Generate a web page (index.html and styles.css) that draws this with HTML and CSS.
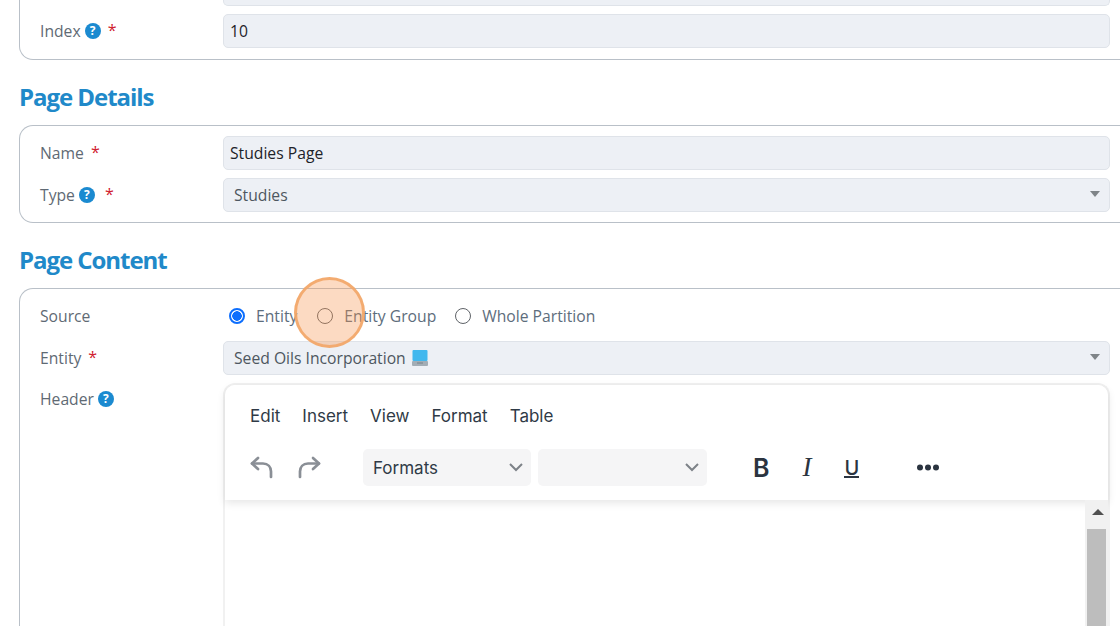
FILE: index.html
```html
<!DOCTYPE html>
<html lang="en">
<head>
    <meta charset="UTF-8">
    <title>Page Settings</title>
    <link rel="stylesheet" href="styles.css">
</head>
<body>
    <div class="page">
        <div class="card card-top">
            <div class="stub-input"></div>
            <div class="field">
                <label class="field-label">Index
                    <span class="help">?</span>
                    <span class="req">*</span>
                </label>
                <div class="input">10</div>
            </div>
        </div>

        <h2 class="section-title">Page Details</h2>
        <div class="card">
            <div class="field">
                <label class="field-label">Name
                    <span class="req req-name">*</span>
                </label>
                <div class="input">Studies Page</div>
            </div>
            <div class="field">
                <label class="field-label">Type
                    <span class="help">?</span>
                    <span class="req req-type">*</span>
                </label>
                <div class="input select">Studies</div>
            </div>
        </div>

        <h2 class="section-title">Page Content</h2>
        <div class="card card-last">
            <div class="field field-radio">
                <label class="field-label">Source</label>
                <div class="radios">
                    <span class="radio checked"></span><span class="radio-text">Entity</span>
                    <span class="radio"></span><span class="radio-text">Entity Group</span>
                    <span class="radio"></span><span class="radio-text">Whole Partition</span>
                </div>
            </div>
            <div class="field">
                <label class="field-label">Entity
                    <span class="req">*</span>
                </label>
                <div class="input select">Seed Oils Incorporation
                    <svg class="laptop" width="16" height="16" viewBox="0 0 16 16">
                        <rect x="0.5" y="0" width="15" height="11" rx="1" fill="#42b8ee"/>
                        <rect x="0" y="11" width="16" height="5" rx="1" fill="#a3adb5"/>
                        <rect x="5" y="12.5" width="6" height="1" fill="#77828a"/>
                    </svg>
                </div>
            </div>
            <div class="field field-editor">
                <label class="field-label">Header
                    <span class="help">?</span>
                </label>
                <div class="editor">
                    <div class="editor-head">
                        <div class="menubar">
                            <span>Edit</span>
                            <span>Insert</span>
                            <span>View</span>
                            <span>Format</span>
                            <span>Table</span>
                        </div>
                        <div class="toolbar">
                            <svg class="tool-icon undo" width="26" height="26" viewBox="0 0 26 26" fill="none" stroke="#8a8f96" stroke-width="2.7" stroke-linecap="round" stroke-linejoin="round">
                                <path d="M9 3 L3 8.5 L9 14"/>
                                <path d="M3 8.5 H14 C19 8.5 22 12 22 16.5 V22"/>
                            </svg>
                            <svg class="tool-icon redo" width="26" height="26" viewBox="0 0 26 26" fill="none" stroke="#8a8f96" stroke-width="2.7" stroke-linecap="round" stroke-linejoin="round">
                                <path d="M17 3 L23 8.5 L17 14"/>
                                <path d="M23 8.5 H12 C7 8.5 4 12 4 16.5 V22"/>
                            </svg>
                            <div class="dropdown dropdown-formats">Formats
                                <svg width="14" height="9" viewBox="0 0 14 9" fill="none" stroke="#7d8288" stroke-width="2"><path d="M1 1 L7 7 L13 1"/></svg>
                            </div>
                            <div class="dropdown dropdown-empty">
                                <svg width="14" height="9" viewBox="0 0 14 9" fill="none" stroke="#7d8288" stroke-width="2"><path d="M1 1 L7 7 L13 1"/></svg>
                            </div>
                            <span class="fmt fmt-b">B</span>
                            <span class="fmt fmt-i">I</span>
                            <span class="fmt fmt-u">U</span>
                            <svg class="more" width="22" height="7" viewBox="0 0 22 7" fill="#2b3440">
                                <circle cx="3" cy="3.5" r="3"/><circle cx="11" cy="3.5" r="3"/><circle cx="19" cy="3.5" r="3"/>
                            </svg>
                        </div>
                    </div>
                    <div class="editor-body">
                        <div class="scrollbar">
                            <div class="scroll-btn"></div>
                            <div class="scroll-thumb"></div>
                        </div>
                    </div>
                </div>
            </div>
        </div>
    </div>

    <div class="click-marker"></div>
</body>
</html>
```

FILE: styles.css
```css
* {
    margin: 0;
    padding: 0;
    box-sizing: border-box;
}

html, body {
    height: 626px;
    overflow: hidden;
}

body {
    font-family: "Open Sans", sans-serif;
    background: #fff;
    color: #5b6670;
    font-size: 15.7px;
    position: relative;
}

.page {
    padding-left: 19px;
    height: 626px;
    overflow: hidden;
}

.card {
    border: 1px solid #b9c0c8;
    border-right: none;
    border-radius: 14px 0 0 14px;
    height: 98px;
    padding: 10px 10px 0 20px;
    display: flex;
    flex-direction: column;
    gap: 8px;
}

.card-top {
    height: 60px;
    border-top: none;
    border-top-left-radius: 0;
    padding-top: 0;
}

.card-last {
    height: 500px;
    border-radius: 14px 0 0 0;
    padding-top: 11px;
}

.stub-input {
    height: 6px;
    margin-left: 183px;
    background: #edf0f5;
    border: 1px solid #dfe3e9;
    border-top: none;
    border-radius: 0 0 5px 5px;
}

.section-title {
    color: #2089c9;
    font-size: 24px;
    font-weight: 700;
    line-height: 34px;
    letter-spacing: -1.05px;
    margin: 19.5px 0 11.5px 0;
}

.field {
    display: flex;
    align-items: center;
}

.field-label {
    width: 183px;
    flex: none;
    display: flex;
    align-items: center;
    column-gap: 4px;
    color: #5f6a74;
}

.help {
    width: 16px;
    height: 16px;
    border-radius: 50%;
    background: #1b8ad0;
    color: #fff;
    font-size: 12px;
    font-weight: 700;
    line-height: 16px;
    text-align: center;
}

.req {
    color: #d0202e;
    font-size: 16px;
    margin-left: 3px;
    position: relative;
    top: -1px;
}

.req-type {
    margin-left: 6px;
}

.input {
    flex: 1;
    height: 34px;
    background: #edf0f5;
    border: 1px solid #dfe3e9;
    border-radius: 5px;
    color: #1d2329;
    line-height: 32px;
    padding-left: 6px;
    position: relative;
}

.select {
    color: #4d5760;
    padding-left: 10px;
}

.select::after {
    content: "";
    position: absolute;
    right: 9px;
    top: 12px;
    border-left: 5px solid transparent;
    border-right: 5px solid transparent;
    border-top: 6px solid #7f8488;
}

.laptop {
    vertical-align: -2px;
    margin-left: 2px;
}

.field-radio {
    height: 32px;
    margin-bottom: 1px;
}

.radios {
    display: flex;
    align-items: center;
    margin-left: 6px;
    color: #5d6d7c;
}

.radio {
    width: 16px;
    height: 16px;
    border: 1px solid #5f6368;
    border-radius: 50%;
    margin-right: 11px;
}

.radio.checked {
    border: 2px solid #0d6efd;
    background: radial-gradient(circle, #0d6efd 0 4.5px, #fff 5px);
}

.radio-text {
    margin-right: 19px;
}

.radio.checked + .radio-text {
    margin-right: 20px;
}

.field-editor {
    align-items: flex-start;
}

.field-editor .field-label {
    margin-top: 5px;
}

.editor {
    flex: 1;
    height: 300px;
    border: 2px solid #f1f1f1;
    border-bottom: none;
    border-radius: 12px 12px 0 0;
    font-family: "Inter", sans-serif;
}

.editor-head {
    height: 115px;
    background: #fff;
    box-shadow: 0 3px 8px rgba(0, 0, 0, 0.1);
    border-radius: 10px 10px 0 0;
    position: relative;
    padding-top: 19px;
}

.menubar {
    display: flex;
    gap: 22px;
    padding-left: 25px;
    font-size: 17px;
    line-height: 24px;
    color: #2f3a46;
}

.toolbar {
    display: flex;
    align-items: center;
    height: 37px;
    margin-top: 21px;
}

.tool-icon.undo {
    margin-left: 24px;
}

.tool-icon.redo {
    margin-left: 21px;
}

.dropdown {
    height: 37px;
    background: #f5f5f6;
    border-radius: 5px;
    display: flex;
    align-items: center;
    justify-content: space-between;
    padding: 0 8px 0 10px;
    color: #2f3a46;
    font-size: 17px;
}

.dropdown-formats {
    width: 168px;
    margin-left: 41px;
}

.dropdown-empty {
    width: 169px;
    margin-left: 7px;
    justify-content: flex-end;
}

.fmt {
    color: #2b3440;
    text-align: center;
}

.fmt-b {
    font-size: 25px;
    font-weight: 600;
    margin-left: 46px;
}

.fmt-i {
    font-family: "Liberation Serif", serif;
    font-style: italic;
    font-size: 27px;
    margin-left: 33px;
}

.fmt-u {
    font-size: 20px;
    font-weight: 500;
    line-height: 16px;
    border-bottom: 2px solid #2b3440;
    margin-left: 33px;
    margin-top: 2px;
}

.more {
    margin-left: 58px;
}

.editor-body {
    height: 300px;
    position: relative;
    display: flex;
    justify-content: flex-end;
}

.scrollbar {
    width: 23px;
    background: #f1f1f1;
    padding: 0 2px;
}

.scroll-btn {
    height: 29px;
    position: relative;
}

.scroll-btn::after {
    content: "";
    position: absolute;
    left: 5px;
    top: 9px;
    border-left: 6px solid transparent;
    border-right: 6px solid transparent;
    border-bottom: 6px solid #505050;
}

.scroll-thumb {
    height: 200px;
    background: #bdbdbd;
}

.click-marker {
    position: absolute;
    left: 294px;
    top: 277px;
    width: 71px;
    height: 71px;
    border-radius: 50%;
    background: rgba(246, 150, 80, 0.35);
    border: 3px solid rgba(243, 166, 104, 0.9);
}
```
